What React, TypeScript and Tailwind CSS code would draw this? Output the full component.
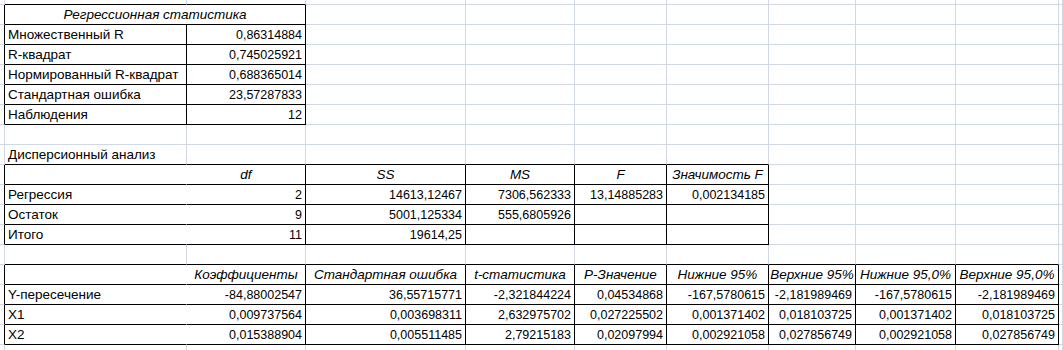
import React from "react";

type Cell = { t?: string; a?: "l" | "r" | "c"; i?: boolean; span?: number };

const G = "g"; // gray
const B = "b"; // black
const N = "n"; // none

// table definitions
const inRange = (v: number, a: number, b: number) => v >= a && v <= b;

function vLine(r: number, c: number): string {
  // boundary after column c in row r
  if (inRange(r, 1, 6)) {
    if (c === 0 || c === 2) return B;
    if (c === 1) return r === 1 ? N : B;
  }
  if (inRange(r, 9, 12)) {
    if (c === 0 || inRange(c, 2, 6)) return B;
    if (c === 1) return N;
  }
  if (inRange(r, 14, 17)) {
    if (c === 0 || inRange(c, 2, 9)) return B;
    if (c === 1) return N;
  }
  return G;
}

function hLine(r: number, c: number): string {
  // boundary below row r in column c
  if (inRange(c, 1, 2) && inRange(r, 0, 6)) return B;
  if (inRange(c, 1, 6) && inRange(r, 8, 12)) return B;
  if (inRange(c, 1, 9) && inRange(r, 13, 17)) return B;
  return G;
}

const rows: Record<number, Cell[]> = {
  1: [{ t: "Регрессионная статистика", a: "c", i: true, span: 2 }],
  2: [{ t: "Множественный R" }, { t: "0,86314884", a: "r" }],
  3: [{ t: "R-квадрат" }, { t: "0,745025921", a: "r" }],
  4: [{ t: "Нормированный R-квадрат" }, { t: "0,688365014", a: "r" }],
  5: [{ t: "Стандартная ошибка" }, { t: "23,57287833", a: "r" }],
  6: [{ t: "Наблюдения" }, { t: "12", a: "r" }],
  8: [{ t: "Дисперсионный анализ" }],
  9: [
    {},
    { t: "df", a: "c", i: true },
    { t: "SS", a: "c", i: true },
    { t: "MS", a: "c", i: true },
    { t: "F", a: "c", i: true },
    { t: "Значимость F", a: "c", i: true },
  ],
  10: [
    { t: "Регрессия" },
    { t: "2", a: "r" },
    { t: "14613,12467", a: "r" },
    { t: "7306,562333", a: "r" },
    { t: "13,14885283", a: "r" },
    { t: "0,002134185", a: "r" },
  ],
  11: [
    { t: "Остаток" },
    { t: "9", a: "r" },
    { t: "5001,125334", a: "r" },
    { t: "555,6805926", a: "r" },
    {},
    {},
  ],
  12: [{ t: "Итого" }, { t: "11", a: "r" }, { t: "19614,25", a: "r" }, {}, {}, {}],
  14: [
    {},
    { t: "Коэффициенты", a: "c", i: true },
    { t: "Стандартная ошибка", a: "c", i: true },
    { t: "t-статистика", a: "c", i: true },
    { t: "P-Значение", a: "c", i: true },
    { t: "Нижние 95%", a: "c", i: true },
    { t: "Верхние 95%", a: "c", i: true },
    { t: "Нижние 95,0%", a: "c", i: true },
    { t: "Верхние 95,0%", a: "c", i: true },
  ],
  15: [
    { t: "Y-пересечение" },
    { t: "-84,88002547", a: "r" },
    { t: "36,55715771", a: "r" },
    { t: "-2,321844224", a: "r" },
    { t: "0,04534868", a: "r" },
    { t: "-167,5780615", a: "r" },
    { t: "-2,181989469", a: "r" },
    { t: "-167,5780615", a: "r" },
    { t: "-2,181989469", a: "r" },
  ],
  16: [
    { t: "X1" },
    { t: "0,009737564", a: "r" },
    { t: "0,003698311", a: "r" },
    { t: "2,632975702", a: "r" },
    { t: "0,027225502", a: "r" },
    { t: "0,001371402", a: "r" },
    { t: "0,018103725", a: "r" },
    { t: "0,001371402", a: "r" },
    { t: "0,018103725", a: "r" },
  ],
  17: [
    { t: "X2" },
    { t: "0,015388904", a: "r" },
    { t: "0,005511485", a: "r" },
    { t: "2,79215183", a: "r" },
    { t: "0,02097994", a: "r" },
    { t: "0,002921058", a: "r" },
    { t: "0,027856749", a: "r" },
    { t: "0,002921058", a: "r" },
    { t: "0,027856749", a: "r" },
  ],
};

const NCOLS = 11;
const NROWS = 19;

function rClass(v: string) {
  return v === B ? "border-r-black" : v === N ? "border-r-white" : "border-r-[#d0d7e5]";
}
function bClass(v: string) {
  return v === B ? "border-b-black" : v === N ? "border-b-white" : "border-b-[#d0d7e5]";
}

export default function App() {
  const cells: React.ReactNode[] = [];
  for (let r = 0; r < NROWS; r++) {
    const data = rows[r];
    let c = 0;
    let di = 0;
    while (c < NCOLS) {
      let cell: Cell = {};
      let span = 1;
      if (data && c >= 1 && di < data.length) {
        cell = data[di];
        span = cell.span ?? 1;
        di++;
      }
      const lastCol = c + span - 1;
      const v = vLine(r, lastCol);
      const h = hLine(r, c);
      const align =
        cell.a === "r" ? "justify-end pr-[3px]" : cell.a === "c" ? "justify-center" : "justify-start pl-[3px]";
      const isNum = cell.a === "r";
      cells.push(
        <div
          key={`${r}-${c}`}
          className={`flex items-end overflow-visible whitespace-nowrap border-r border-b bg-white ${rClass(v)} ${bClass(h)} ${align} ${
            span === 2 ? "col-span-2" : ""
          }`}
        >
          {cell.t ? (
            <span
              className={`leading-[16px] pb-[1px] text-black ${isNum ? "text-[12.5px]" : "text-[13.5px]"} ${
                cell.i ? "italic" : ""
              }`}
            >
              {cell.t}
            </span>
          ) : null}
        </div>
      );
      c += span;
    }
  }
  return (
    <div
      className="w-[1063px] h-[350px] overflow-hidden bg-white"
      style={{ fontFamily: '"Liberation Sans", Arial, sans-serif' }}
    >
      <div className="grid grid-cols-[5px_182px_119px_160px_109px_92px_102px_87px_100px_103px_1fr] grid-rows-[5px_repeat(18,20px)]">
        {cells}
      </div>
    </div>
  );
}
